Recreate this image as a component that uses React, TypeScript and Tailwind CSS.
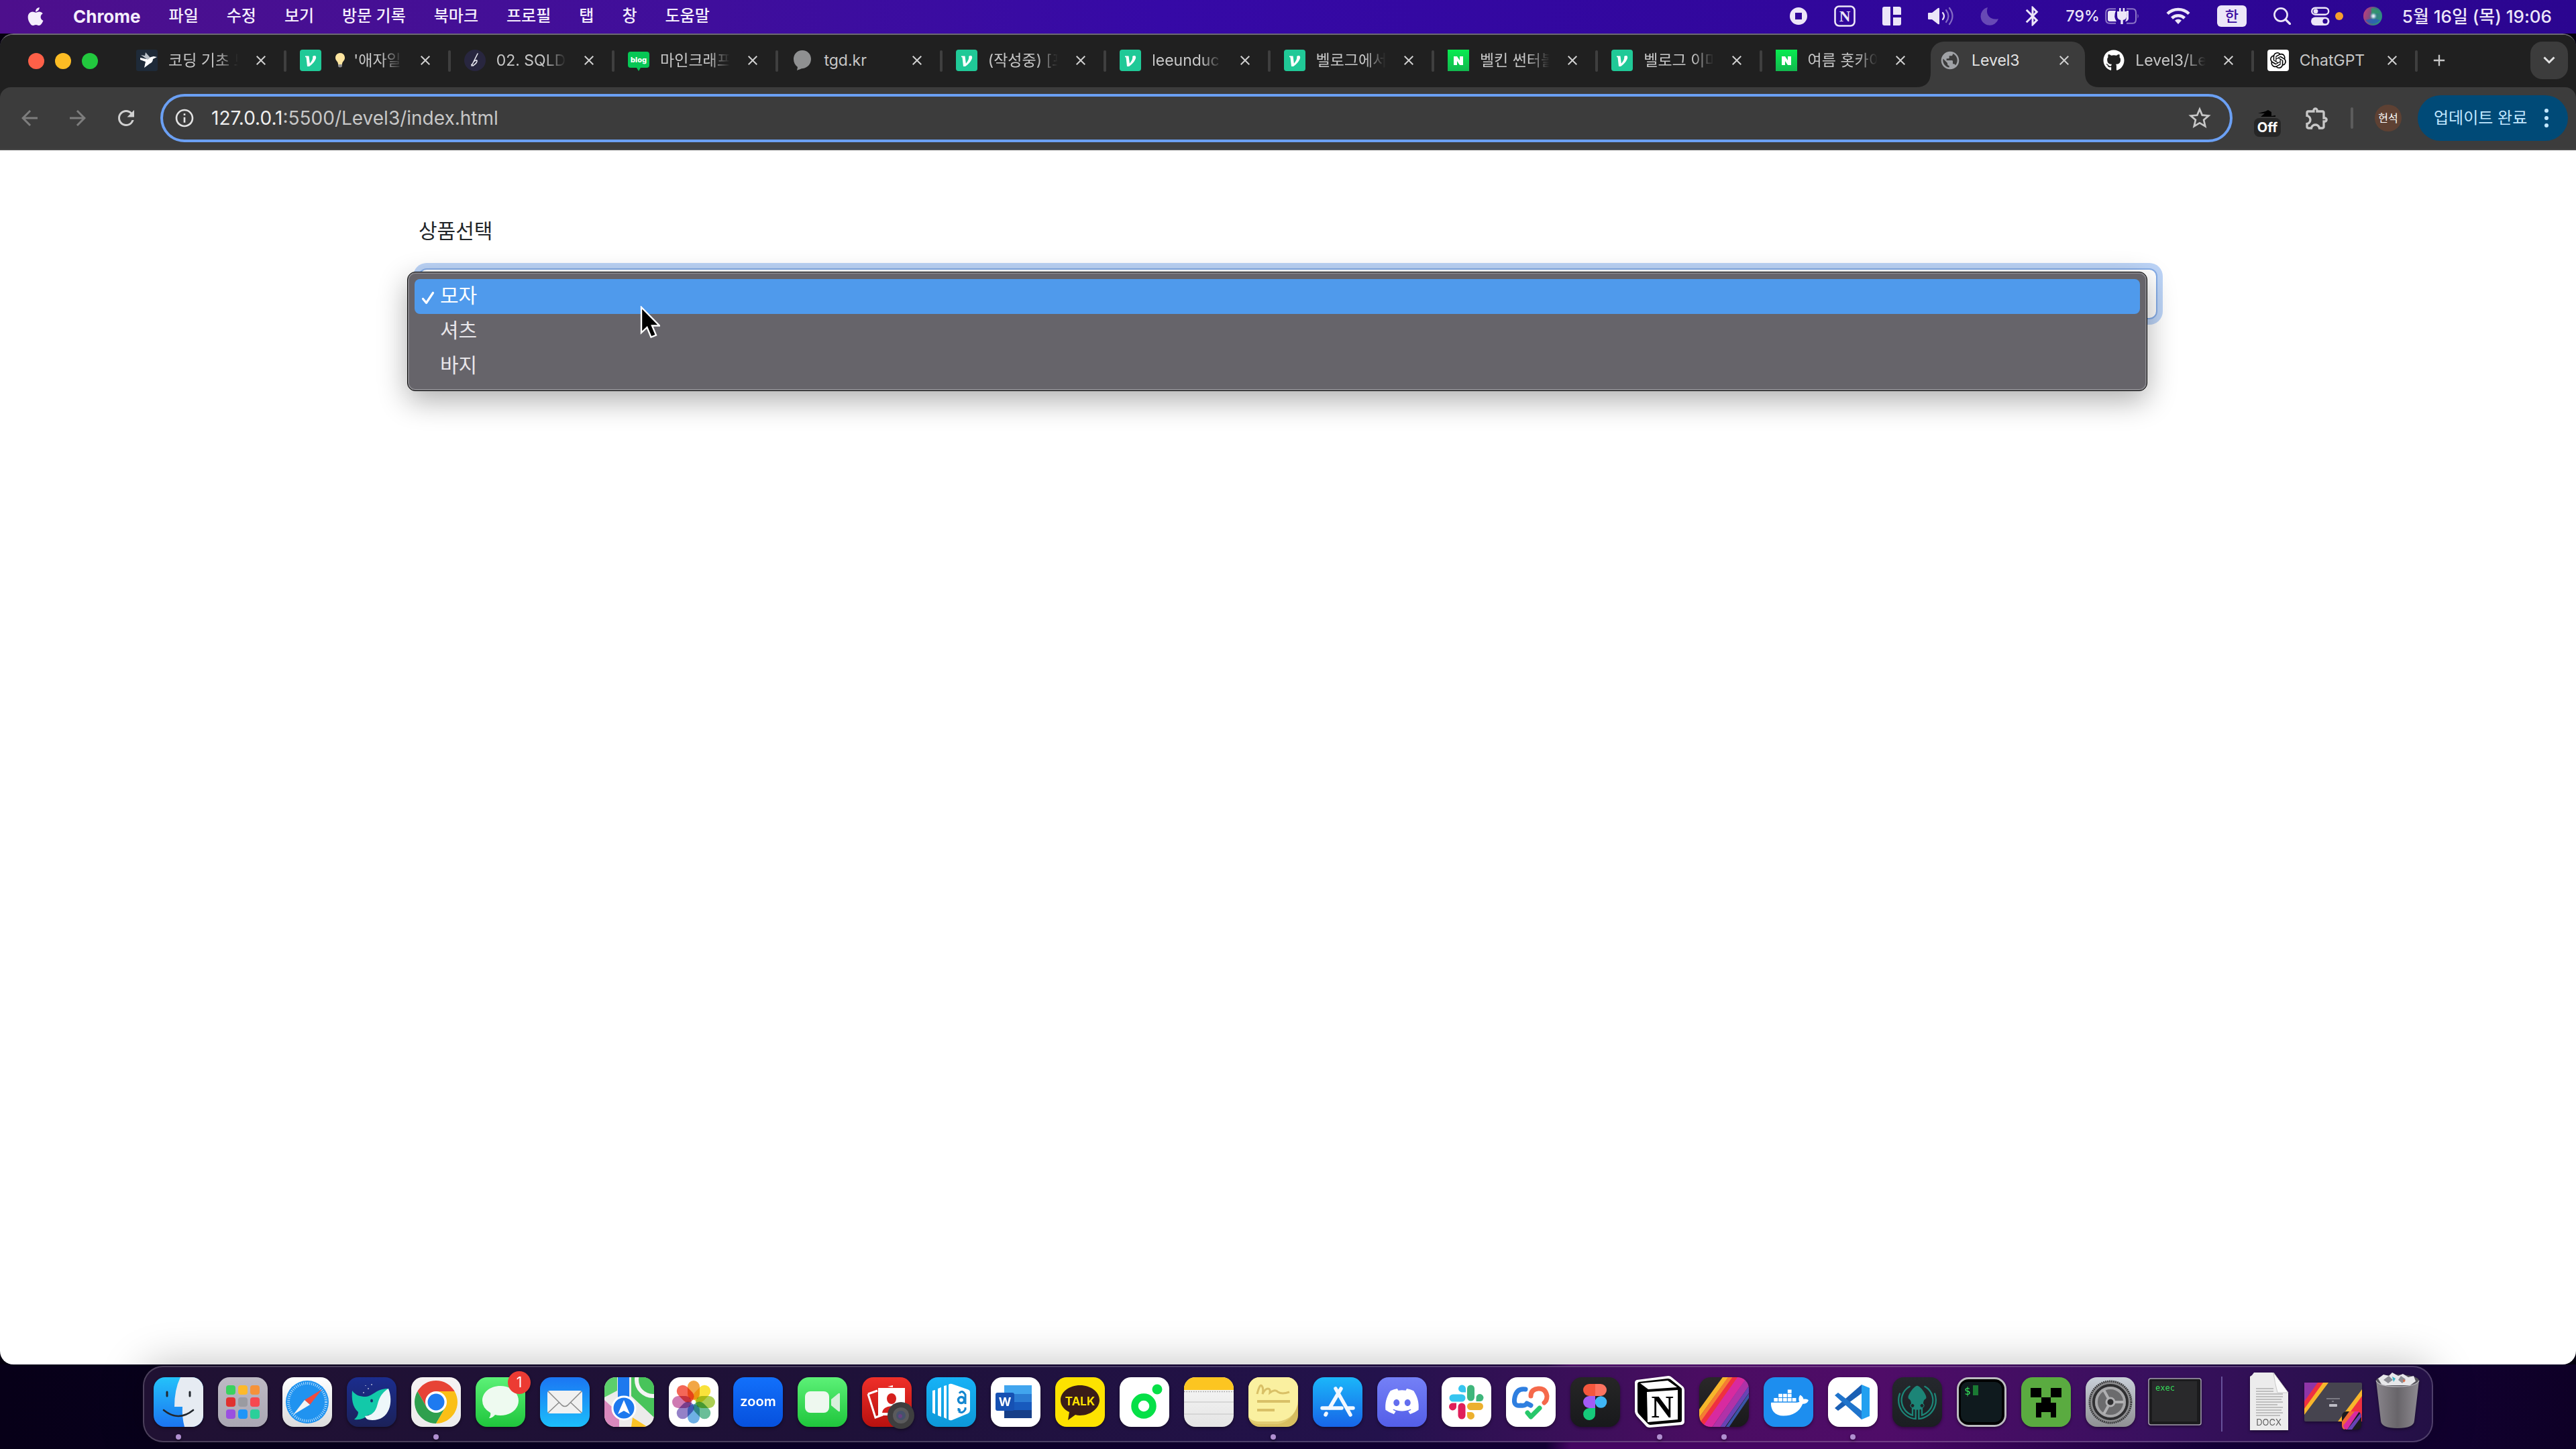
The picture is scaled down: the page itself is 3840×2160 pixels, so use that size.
import { ReactNode } from 'react'
import { clsx } from 'clsx'
import { FaApple, FaDiscord, FaDocker, FaGithub } from 'react-icons/fa'
import {
  MdAdd,
  MdArrowBack,
  MdArrowForward,
  MdBluetooth,
  MdClose,
  MdInfoOutline,
  MdOutlineExtension,
  MdPublic,
  MdRefresh,
  MdStarBorder,
} from 'react-icons/md'
import { SiGitkraken, SiOpenai } from 'react-icons/si'

const SANS = 'Inter, "Noto Sans CJK KR", sans-serif'

/* ---------- menu bar ---------- */

const MENUS = ['파일', '수정', '보기', '방문 기록', '북마크', '프로필', '탭', '창', '도움말']

function StatusIcons() {
  return (
    <div className="flex items-center gap-10 text-[#ece6f8]">
      <svg className="h-[26px] w-[26px]" viewBox="0 0 26 26">
        <path fillRule="evenodd" fill="currentColor" d="M13 0a13 13 0 1 1 0 26 13 13 0 0 1 0-26zM8 8v10h10V8z" />
      </svg>
      <svg className="h-8 w-8" viewBox="0 0 32 32">
        <rect x="1.5" y="1.5" width="29" height="29" rx="6" fill="none" stroke="currentColor" strokeWidth="2.6" />
        <text x="16" y="24" textAnchor="middle" fontFamily="Liberation Serif, serif" fontWeight="700" fontSize="23" fill="currentColor">N</text>
      </svg>
      <svg className="h-7 w-7" viewBox="0 0 28 28" fill="currentColor">
        <path d="M3 0h9v28H3a3 3 0 0 1-3-3V3a3 3 0 0 1 3-3zM16 0h9a3 3 0 0 1 3 3v9H16zM16 16h12v9a3 3 0 0 1-3 3h-9z" />
      </svg>
      <svg className="h-7 w-[38px]" viewBox="0 0 38 28" fill="none" stroke="currentColor" strokeWidth="2.2" strokeLinecap="round">
        <path d="M1 9h5l9-7q2-1 2 1v22q0 2-2 1l-9-7H1q-1 0-1-1v-8q0-1 1-1z" fill="currentColor" stroke="none" />
        <path d="M22 9q4 5 0 10" />
        <path d="M27 5q7 9 0 18" opacity=".45" />
        <path d="M32 2q9 12 0 24" opacity=".45" />
      </svg>
      <svg className="h-7 w-7" viewBox="0 0 28 28">
        <path d="M11 1C7 12 15 21 27 18A13.500 13.500 0 1 1 11 1z" fill="currentColor" opacity=".3" />
      </svg>
      <MdBluetooth className="h-8 w-5 scale-110" preserveAspectRatio="xMidYMid slice" />
      <div className="flex items-center gap-2">
        <span className="text-[23px] font-medium">79%</span>
        <svg className="h-6 w-[51px]" viewBox="0 0 51 24">
          <path d="M16 1.200H7Q1.200 1.200 1.200 7v10q0 5.800 5.800 5.800h9M32 1.200h9q5 0 5 5.800v10q0 5.800-5 5.800h-9" fill="none" stroke="currentColor" strokeWidth="2" opacity=".5" />
          <path d="M48.500 8.500q2.500 3.500 0 7z" fill="currentColor" opacity=".5" />
          <path d="M16 4H7q-3 0-3 3v10q0 3 3 3h10q-5-7-1-16zM32 4h3v12q-1 4-5 4 3-4 2-16z" fill="currentColor" />
          <path d="M18 5h3V0h2.600v5h3V0h2.600v5h3v6q0 6-5.500 7v6h-3.400v-6Q18 17 18 11z" fill="currentColor" />
        </svg>
      </div>
      <svg className="h-[26px] w-9" viewBox="0 0 36 26" fill="none" stroke="currentColor" strokeWidth="4.500">
        <path d="M2 9.500a23 23 0 0 1 32 0" />
        <path d="M8.500 16a14 14 0 0 1 19 0" />
        <path d="M18 25l-5-5.500a8 8 0 0 1 10 0z" fill="currentColor" stroke="none" />
      </svg>
      <span className="flex h-8 w-11 items-center justify-center rounded-md bg-[#ece6f8] text-[22px] leading-8 font-medium text-[#3a0aa0]">
        한
      </span>
      <div className="flex items-center gap-[30px]">
        <svg className="h-[26px] w-[26px]" viewBox="0 0 26 26" fill="none" stroke="currentColor" strokeWidth="2.600" strokeLinecap="round">
          <circle cx="11" cy="11" r="9.600" />
          <path d="M18 18l6.500 6.500" strokeWidth="3.200" />
        </svg>
        <div className="flex items-center gap-2">
          <svg className="h-7 w-7" viewBox="0 0 28 28">
            <rect x="1.200" y="1.700" width="25" height="10" rx="5" fill="none" stroke="currentColor" strokeWidth="2.400" />
            <circle cx="7" cy="6.700" r="3.400" fill="currentColor" />
            <rect x="0" y="15.500" width="27.500" height="12.500" rx="6.200" fill="currentColor" />
            <circle cx="21" cy="21.700" r="3.600" fill="#2c0592" />
          </svg>
          <span className="h-3 w-3 rounded-full bg-[#f89f2c]" />
        </div>
        <svg className="h-7 w-7" viewBox="0 0 28 28">
          <defs>
            <radialGradient id="siriGlow">
              <stop offset="0" stopColor="#fff" />
              <stop offset=".4" stopColor="#d6ecfa" stopOpacity=".7" />
              <stop offset="1" stopColor="#2a8fa0" stopOpacity="0" />
            </radialGradient>
            <linearGradient id="siriBase" x1="0" y1="0" x2="1" y2=".3">
              <stop offset="0" stopColor="#c83c7c" />
              <stop offset=".4" stopColor="#8a4a80" />
              <stop offset=".7" stopColor="#3a7a80" />
              <stop offset="1" stopColor="#2f8f80" />
            </linearGradient>
          </defs>
          <circle cx="14" cy="14" r="14" fill="url(#siriBase)" />
          <path d="M3 20q11-4 22 0a14 14 0 0 1-22 0z" fill="#2b5fb8" opacity=".8" />
          <path d="M12 2q9 0 13 8-6-1-13 4z" fill="#2f9a6c" opacity=".8" />
          <circle cx="15" cy="14" r="6" fill="url(#siriGlow)" />
        </svg>
        <time className="text-[26px] font-medium whitespace-nowrap">5월 16일 (목) 19:06</time>
      </div>
    </div>
  )
}

function MenuBar() {
  return (
    <header className="flex h-[50px] items-center justify-between bg-linear-to-r from-[#4d0f8c] via-[#3609a6] via-45% to-[#2b0590] pr-9 pb-[2px] pl-[39px] text-[24px] text-[#f4eefc]">
      <nav className="flex items-center gap-[42px] font-medium whitespace-nowrap">
        <FaApple className="h-[31px] w-7" />
        <span className="text-[26px] font-bold">Chrome</span>
        {MENUS.map((m) => (
          <button key={m} type="button">
            {m}
          </button>
        ))}
      </nav>
      <StatusIcons />
    </header>
  )
}

/* ---------- tabs ---------- */

const velog = (
  <svg viewBox="0 0 32 32" className="h-8 w-8">
    <rect width="32" height="32" rx="4" fill="#20c997" />
    <path d="M8 9.500h5.500l1.400 11.200C18 17 19.800 13.500 19.200 10c1.500-1.400 4.800-1.500 5 1.200C24.300 15.500 18.500 22 14 25h-3L9.500 11.500 8 11z" fill="#fff" />
  </svg>
)

const naver = (
  <svg viewBox="0 0 32 32" className="h-8 w-8">
    <defs>
      <linearGradient id="naverBg" x1="0" y1="0" x2="0" y2="1">
        <stop offset="0" stopColor="#08ec50" />
        <stop offset="1" stopColor="#12b84e" />
      </linearGradient>
    </defs>
    <rect width="32" height="32" fill="url(#naverBg)" />
    <path d="M9 10h5l4 6v-6h5v13h-5l-4-6v6H9z" fill="#fff" />
  </svg>
)

const bird = (
  <svg viewBox="0 0 32 32" className="h-8 w-8">
    <rect width="32" height="32" rx="3" fill="#1e2a38" />
    <path d="M6 12l9 2 7-3 4-1 5 1-6 3q0 5-5 7l-8 6 2-9-8-3z" fill="#fff" />
    <path d="M14 4l7 8-4 3-10-7 6 1z" fill="#b9c0c8" />
  </svg>
)

const quill = (
  <svg viewBox="0 0 32 32" className="h-8 w-8">
    <circle cx="16" cy="16" r="16" fill="#28263f" />
    <path d="M20 6L11 24M14 18q5-4 5-1t-6 7q-2 0-2-2" fill="none" stroke="#e5e5ee" strokeWidth="1.600" strokeLinecap="round" />
  </svg>
)

const blog = (
  <svg viewBox="0 0 32 32" className="h-8 w-8">
    <path d="M4 3h24q4 0 4 4v16q0 4-4 4h-9l-3 5-3-5H4q-4 0-4-4V7q0-4 4-4z" fill="#06c755" />
    <text x="16" y="18.500" textAnchor="middle" fontFamily="Inter, sans-serif" fontSize="11" fontWeight="800" fill="#fff">blog</text>
  </svg>
)

const bubble = (
  <svg viewBox="0 0 32 32" className="h-8 w-8">
    <path d="M16 1c8 0 13 6 13 13 0 8-6 13-12 14-3 0-6 2-9 3l1-5C5 23 3 19 3 14 3 7 8 1 16 1z" fill="#8f9091" />
  </svg>
)

const globe = <MdPublic className="h-8 w-8 text-[#a0a2a6]" />

const github = <FaGithub className="h-8 w-8 text-white" />

const openai = (
  <span className="flex h-8 w-8 items-center justify-center rounded bg-white">
    <SiOpenai className="h-6 w-6 text-black" />
  </span>
)

const bulb = (
  <svg viewBox="0 0 16 24" className="mr-3 ml-1 inline-block h-6 w-4 shrink-0">
    <path d="M8 1c5 0 7 4 7 7 0 5-4 5-4 10H5C5 13 1 13 1 8c0-3 2-7 7-7z" fill="#ffe6a0" />
    <path d="M5 18h6v3q-3 3-6 0z" fill="#8b8b8b" />
  </svg>
)

interface TabItem {
  icon: ReactNode
  title: string
  prefix?: ReactNode
  active?: boolean
}

const TABS: TabItem[] = [
  { icon: bird, title: '코딩 기초 트' },
  { icon: velog, title: "'애자일", prefix: bulb },
  { icon: quill, title: '02. SQLD' },
  { icon: blog, title: '마인크래프' },
  { icon: bubble, title: 'tgd.kr' },
  { icon: velog, title: '(작성중) [프' },
  { icon: velog, title: 'leeunduc' },
  { icon: velog, title: '벨로그에서' },
  { icon: naver, title: '벨킨 썬터볼' },
  { icon: velog, title: '벨로그 이미' },
  { icon: naver, title: '여름 홋카이' },
  { icon: globe, title: 'Level3', active: true },
  { icon: github, title: 'Level3/Le' },
  { icon: openai, title: 'ChatGPT' },
]

const UNFADED = ['tgd.kr', 'Level3', 'ChatGPT']

function Tab({ icon, title, prefix, active }: TabItem) {
  const divided = !active && title !== '여름 홋카이'
  return (
    <div className="relative flex h-14 min-w-0 flex-1 items-center pr-5 pl-5">
      {active && (
        <div className="absolute inset-x-[7px] top-0 -bottom-3 rounded-t-[20px] bg-[#3c3c3c]">
          <svg viewBox="0 0 22 22" className="absolute right-full bottom-0 h-[22px] w-[22px]">
            <path d="M22 0v22H0Q22 22 22 0z" fill="#3c3c3c" />
          </svg>
          <svg viewBox="0 0 22 22" className="absolute bottom-0 left-full h-[22px] w-[22px]">
            <path d="M0 0v22h22Q0 22 0 0z" fill="#3c3c3c" />
          </svg>
        </div>
      )}
      <button type="button" className="relative flex min-w-0 flex-1 items-center gap-4 text-left">
        <span className="shrink-0">{icon}</span>
        <span
          className={clsx(
            'flex flex-1 items-center overflow-hidden text-[23px] leading-8 whitespace-nowrap',
            active ? 'text-[#e3e3e3]' : 'text-[#c7c7c7]',
            !UNFADED.includes(title) && '[mask-image:linear-gradient(to_right,black_70%,transparent)]'
          )}
        >
          {prefix}
          {title}
        </span>
      </button>
      <button type="button" aria-label="닫기" className="relative ml-4 flex w-9 shrink-0 justify-center text-[#d0d0d0]">
        <MdClose className="h-6 w-6" />
      </button>
      {divided && <span className="absolute top-[13px] right-0 h-8 w-1 rounded-full bg-[#3f3f3f]" />}
    </div>
  )
}

function TabStrip() {
  return (
    <div className="flex h-[78px] bg-[#202020] pt-[10px]">
      <div className="flex h-14 w-[183px] shrink-0 items-center gap-4 pt-[2px] pl-[42px]">
        <span className="h-6 w-6 rounded-full bg-[#fe6048]" />
        <span className="h-6 w-6 rounded-full bg-[#fcbc24]" />
        <span className="h-6 w-6 rounded-full bg-[#22c83e]" />
      </div>
      <div className="flex min-w-0 flex-1">
        {TABS.map((tab) => (
          <Tab key={tab.title} {...tab} />
        ))}
      </div>
      <div className="flex h-14 w-[236px] shrink-0 items-center justify-between pr-3 pl-[18px]">
        <button type="button" aria-label="새 탭" className="text-[#c7c7c7]">
          <MdAdd className="h-7 w-7" />
        </button>
        <button type="button" aria-label="탭 검색" className="flex h-14 w-14 items-center justify-center rounded-[18px] bg-[#3c3c3c]">
          <svg viewBox="0 0 18 12" className="h-3 w-[18px]" fill="none" stroke="#e3e3e3" strokeWidth="3">
            <path d="M1.500 1.500L9 9l7.500-7.500" />
          </svg>
        </button>
      </div>
    </div>
  )
}

/* ---------- address bar ---------- */

function Toolbar() {
  return (
    <div className="bg-[#202020]">
      <div className="flex h-[94px] items-center rounded-t-2xl border-b-2 border-[#4a4a4a] bg-[#3c3c3c] pr-3 pl-2">
        <button type="button" aria-label="뒤로" className="flex w-[72px] justify-center text-[#7d7d7d]">
          <MdArrowBack className="h-9 w-9" />
        </button>
        <button type="button" aria-label="앞으로" className="flex w-[72px] justify-center text-[#7d7d7d]">
          <MdArrowForward className="h-9 w-9" />
        </button>
        <button type="button" aria-label="새로고침" className="flex w-[72px] justify-center text-[#d0d0d0]">
          <MdRefresh className="h-9 w-9" />
        </button>
        <div className="ml-[15px] flex h-[72px] min-w-0 flex-1 items-center rounded-full border-4 border-[#6ba0f4] pr-[25px] pl-4">
          <MdInfoOutline className="h-8 w-8 shrink-0 text-[#e3e3e3]" />
          <div className="ml-6 min-w-0 flex-1 text-[28px] leading-9 text-[#c7c7c7]" role="textbox" aria-label="주소">
            <span className="text-[#eeeeee]">127.0.0.1</span>:5500/Level3/index.html
          </div>
          <button type="button" aria-label="북마크" className="text-[#c7c7c7]">
            <MdStarBorder className="h-10 w-10" />
          </button>
        </div>
        <div className="ml-8 flex h-14 w-10 flex-col justify-end">
          <svg viewBox="0 0 28 12" className="mx-auto h-3 w-7 text-black">
            <path d="M0 5l11-3 4-2 5 3v6l6-1v2H4l6-5z" fill="currentColor" />
          </svg>
          <span className="flex h-7 items-center justify-center rounded-lg bg-[#262626] text-[20px] leading-7 font-bold text-white">Off</span>
        </div>
        <button type="button" aria-label="확장 프로그램" className="ml-9 text-[#c7c7c7]">
          <MdOutlineExtension className="h-10 w-9" preserveAspectRatio="xMidYMid slice" />
        </button>
        <span className="mx-8 h-8 w-1 rounded-full bg-[#5c5c5c]" />
        <span className="flex h-10 w-10 items-center justify-center rounded-full bg-[#5e4133] text-[16px] text-white">현석</span>
        <button
          type="button"
          className="ml-6 flex h-[68px] w-56 items-center justify-between rounded-full bg-[#004a77] pr-[28px] pl-[24px] text-[24px] whitespace-nowrap text-[#c2e7ff]"
        >
          업데이트 완료
          <svg viewBox="0 0 8 30" className="h-[30px] w-2" fill="currentColor">
            <circle cx="4" cy="4" r="3" />
            <circle cx="4" cy="15" r="3" />
            <circle cx="4" cy="26" r="3" />
          </svg>
        </button>
      </div>
    </div>
  )
}

/* ---------- page ---------- */

const OPTIONS = ['모자', '셔츠', '바지']

function Page() {
  return (
    <main className="min-h-0 flex-1 bg-white">
      <div className="mx-auto max-w-[2640px] px-6 pt-24 text-[30px]">
        <label htmlFor="product" className="mb-8 block leading-[48px] text-[#212529]">
          상품선택
        </label>
        <div className="relative">
          <select
            id="product"
            defaultValue="모자"
            className="block h-[76px] w-full appearance-none rounded-xl border-2 border-[#86ade8] bg-white px-6 text-[#212529] ring-8 ring-[#bcd4f7]"
          >
            {OPTIONS.map((o) => (
              <option key={o}>{o}</option>
            ))}
          </select>
          <ul
            role="listbox"
            aria-label="상품선택"
            className="absolute top-[5px] right-[15px] -left-[17px] rounded-xl border border-black bg-[#66646a] p-[10px] text-[#e8e6ea] shadow-[inset_0_0_0_2px_#87868b,0_14px_44px_rgba(0,0,0,0.32)]"
          >
            {OPTIONS.map((o, i) => (
              <li
                key={o}
                role="option"
                aria-selected={i === 0}
                className={clsx('flex h-[52px] items-center rounded-lg pb-1 pl-[10px]', i === 0 && 'bg-[#4f9aec] text-white')}
              >
                <span className="w-7">
                  {i === 0 && (
                    <svg viewBox="0 0 20 20" className="mt-2 h-5 w-5" fill="none" stroke="white" strokeWidth="3.200" strokeLinecap="round" strokeLinejoin="round">
                      <path d="M2.500 11.500l5 6L17.500 2.500" />
                    </svg>
                  )}
                </span>
                {o}
              </li>
            ))}
            <svg viewBox="0 0 30 48" className="absolute top-[50px] left-[346px] h-12 w-[30px]">
              <path d="M2 2v38l8.500-8 6 14.500 7.500-3-6-14h11z" fill="#000" stroke="#fff" strokeWidth="2.400" />
            </svg>
          </ul>
        </div>
      </div>
    </main>
  )
}

/* ---------- dock ---------- */

interface TileProps {
  id: string
  from: string
  to?: string
  children?: ReactNode
}

// rounded app tile with a vertical gradient; content is clipped to it
function Tile({ id, from, to = from, children }: TileProps) {
  return (
    <svg viewBox="0 0 74 74" className="h-[74px] w-[74px] overflow-visible">
      <defs>
        <linearGradient id={id} x1="0" y1="0" x2="0" y2="1">
          <stop offset="0" stopColor={from} />
          <stop offset="1" stopColor={to} />
        </linearGradient>
        <clipPath id={`${id}-clip`}>
          <rect width="74" height="74" rx="17" />
        </clipPath>
      </defs>
      <g clipPath={`url(#${id}-clip)`}>
        <rect width="74" height="74" fill={`url(#${id})`} />
        {children}
      </g>
    </svg>
  )
}

const LAUNCHPAD = ['#3ad25e', '#fdb92a', '#f5923a', '#e0312f', '#9a9ba1', '#f7484f', '#9a4fe0', '#1f95f8', '#2bcf9a']
const PETALS = ['#f19a2c', '#f9de20', '#9fc83c', '#55b58a', '#5aa5e2', '#8570c0', '#c967a8', '#f3523f']

interface App {
  name: string
  running?: boolean
  badge?: string
  art: ReactNode
}

const APPS: App[] = [
  {
    name: 'Finder',
    running: true,
    art: (
      <Tile id="finder" from="#24c2fa" to="#1b74f1">
        <path d="M40 0Q31 18 31 44h12q-1 15 3 30h28V0z" fill="#e6ebf2" />
        <path d="M20 22v6M54 22v6" stroke="#22272e" strokeWidth="3" strokeLinecap="round" />
        <path d="M15 49q22 18 44 0" fill="none" stroke="#22272e" strokeWidth="2.600" strokeLinecap="round" />
      </Tile>
    ),
  },
  {
    name: 'Launchpad',
    art: (
      <Tile id="launchpad" from="#bdb9c4" to="#aaa7b3">
        {LAUNCHPAD.map((c, i) => (
          <rect key={c} x={12 + (i % 3) * 18} y={12 + Math.floor(i / 3) * 18} width="14" height="14" rx="4" fill={c} />
        ))}
      </Tile>
    ),
  },
  {
    name: 'Safari',
    art: (
      <Tile id="safari" from="#ffffff" to="#dcdcdc">
        <circle cx="37" cy="37" r="32" fill="#2093f0" />
        <circle cx="37" cy="37" r="28" fill="none" stroke="#bfe2fb" strokeWidth="4" strokeDasharray="1 2" />
        <path d="M59 18L41 41l-8-7z" fill="#f14c3e" />
        <path d="M33 34l8 7-25 15z" fill="#f3f3f3" />
      </Tile>
    ),
  },
  {
    name: 'Whale',
    art: (
      <Tile id="whale" from="#1b2d8e" to="#1b2159">
        <path d="M8 20c5 7 12 9 20 9 12-1 15-12 34-12L48 52 30 57q-5 7-19 6 6-5 6-11C8 44 7 32 8 20z" fill="#12c9a9" />
        <path d="M62 17c8 20 2 47-24 47-8 0-10-3-11-6 16-2 17-12 20-22 3-9 8-15 15-19z" fill="#eef7fa" />
        <ellipse cx="37" cy="35" rx="2" ry="2.500" fill="#16336f" />
        <path d="M25 22v2M32 16v2M37 10v2M28 12v1" stroke="#fff" strokeWidth="1" />
      </Tile>
    ),
  },
  {
    name: 'Chrome',
    running: true,
    art: (
      <Tile id="chrome" from="#f6f3f3" to="#ececec">
        <path d="M9.300 21A32 32 0 0 1 64.700 21H37L23.100 45z" fill="#e74335" />
        <path d="M9.300 21A32 32 0 0 0 37 69l13.900-24H23.100z" fill="#2fa04e" />
        <path d="M64.700 21A32 32 0 0 1 37 69l13.900-24L37 21z" fill="#fabf16" />
        <circle cx="37" cy="37" r="16" fill="#fff" />
        <circle cx="37" cy="37" r="12.500" fill="#1e7af0" />
      </Tile>
    ),
  },
  {
    name: '메시지',
    badge: '1',
    art: (
      <Tile id="messages" from="#5cf177" to="#1fc63c">
        <path d="M37 13c16 0 27 10 27 22S53 57 37 57q-5 0-8-1-4 5-9 5 3-4 2-8-12-7-12-18c0-12 11-22 27-22z" fill="#eefaf0" />
      </Tile>
    ),
  },
  {
    name: 'Mail',
    art: (
      <Tile id="mail" from="#1b76f3" to="#1cbefb">
        <rect x="11" y="20" width="52" height="34" rx="4" fill="#f1f1f1" />
        <path d="M12 21l21 21q4 3 8 0l21-21M12 53l17-16M62 53L45 37" fill="none" stroke="#8c8c8c" strokeWidth="1.600" />
      </Tile>
    ),
  },
  {
    name: '지도',
    art: (
      <Tile id="maps" from="#ecebea">
        <path d="M0 0h19v20L0 30z" fill="#5ccf6b" />
        <path d="M40 0h34v60L40 28z" fill="#48c45a" />
        <circle cx="72" cy="4" r="24" fill="#48c45a" stroke="#f4f4f4" strokeWidth="6" />
        <path d="M0 34l22 20v20H0z" fill="#d988bd" />
        <path d="M42 60l22 14H40z" fill="#fcc224" />
        <path d="M20 0h17v40H20z" fill="#1d79ee" />
        <circle cx="29" cy="46" r="17" fill="#1d79ee" stroke="#fff" strokeWidth="3" />
        <path d="M29 34l9 21-9-5-9 5z" fill="#fff" />
      </Tile>
    ),
  },
  {
    name: '사진',
    art: (
      <Tile id="photos" from="#ffffff">
        {PETALS.map((c, i) => (
          <rect
            key={c}
            x="28"
            y="5"
            width="18"
            height="29"
            rx="9"
            fill={c}
            opacity=".88"
            transform={`rotate(${i * 45} 37 37)`}
            className="mix-blend-multiply"
          />
        ))}
      </Tile>
    ),
  },
  {
    name: 'zoom',
    art: (
      <Tile id="zoom" from="#1270fb" to="#0650dd">
        <text x="37" y="43" textAnchor="middle" fontFamily="Inter, sans-serif" fontWeight="600" fontSize="20" fill="#fff">zoom</text>
      </Tile>
    ),
  },
  {
    name: 'FaceTime',
    art: (
      <Tile id="facetime" from="#5cf177" to="#1fc63c">
        <rect x="11" y="21" width="36" height="32" rx="8" fill="#eef8ef" />
        <path d="M50 33l11-9q2-1 2 1v25q0 2-2 1l-11-9z" fill="#d9efdc" />
      </Tile>
    ),
  },
  {
    name: 'Photo Booth',
    art: (
      <svg viewBox="0 0 74 74" className="h-[74px] w-[74px] overflow-visible">
        <defs>
          <linearGradient id="booth" x1="0" y1="0" x2="0" y2="1">
            <stop offset="0" stopColor="#ef2f29" />
            <stop offset="1" stopColor="#b8110f" />
          </linearGradient>
        </defs>
        <rect width="74" height="74" rx="17" fill="url(#booth)" />
        <path d="M9 25l14-5M9 25l11 35 11-4" fill="none" stroke="#fff" strokeWidth="3" />
        <path d="M38 14l8-2v3z" fill="#fff" />
        <rect x="24" y="16" width="40" height="41" fill="#fff" />
        <ellipse cx="44" cy="32" rx="7" ry="8" fill="#d5201d" />
        <path d="M30 53q1-9 14-10l8 4-8 6z" fill="#d5201d" />
        <circle cx="58" cy="57" r="20" fill="#3e3e3f" />
        <circle cx="58" cy="57" r="12" fill="#5a5a5c" />
        <circle cx="58" cy="57" r="7" fill="#46516b" />
        <circle cx="57" cy="58" r="3" fill="#6a3f80" />
      </svg>
    ),
  },
  {
    name: '밀리의 서재',
    art: (
      <Tile id="millie" from="#17b2f6" to="#0d98d8">
        <path d="M9 20l4-1v36l-4-2zM17 17l5-2v44l-5-2zM26 13l4-1v50l-4-2z" fill="#fff" />
        <path d="M33 11q2-2 5-1l23 8q4 1 4 4v27q0 3-3 5L38 64q-3 1-5-1z" fill="#fff" />
        <circle cx="52" cy="34" r="4.500" fill="none" stroke="#1387d0" strokeWidth="3.400" />
        <path d="M49 24q4-6 9 2v14M48 46v3h3M48 51q6 4 10-3v-3" fill="none" stroke="#1387d0" strokeWidth="3" />
      </Tile>
    ),
  },
  {
    name: 'Word',
    art: (
      <Tile id="word" from="#ffffff">
        <rect x="20" y="12" width="41" height="13" fill="#41a5ee" />
        <rect x="20" y="25" width="41" height="12" fill="#2b7cd3" />
        <rect x="20" y="37" width="41" height="12" fill="#185abd" />
        <rect x="20" y="49" width="41" height="12" fill="#163f88" />
        <rect x="7" y="23" width="28" height="27" rx="3" fill="#1651b3" />
        <text x="21" y="43" textAnchor="middle" fontFamily="Inter, sans-serif" fontWeight="700" fontSize="18" fill="#fff">W</text>
      </Tile>
    ),
  },
  {
    name: '카카오톡',
    art: (
      <Tile id="kakao" from="#fde200">
        <path d="M37 12c16 0 29 10 29 22S53 57 37 57q-4 0-7-1l-11 8 2-12C13 48 8 42 8 34c0-12 13-22 29-22z" fill="#3a1c18" />
        <text x="37" y="42" textAnchor="middle" fontFamily="Inter, sans-serif" fontWeight="700" fontSize="17" fill="#fde200">TALK</text>
      </Tile>
    ),
  },
  {
    name: 'Melon',
    art: (
      <Tile id="melon" from="#ffffff">
        <circle cx="36" cy="43" r="13.500" fill="none" stroke="#06e047" strokeWidth="10.500" />
        <circle cx="56" cy="18" r="7.500" fill="#06e047" />
      </Tile>
    ),
  },
  {
    name: '메모',
    art: (
      <Tile id="notes" from="#f8f8f8" to="#e4e4e4">
        <rect width="74" height="19" fill="#fcc521" />
        <path d="M0 21.500h74" stroke="#9c9c9c" strokeWidth="1.500" strokeDasharray="1.500 2" />
        <path d="M0 37h74M0 55h74" stroke="#cfcfcf" strokeWidth="1.500" />
      </Tile>
    ),
  },
  {
    name: '스티커',
    running: true,
    art: (
      <Tile id="stickies" from="#cdb057" to="#d9c061">
        <path d="M0 0h74v40Q66 66 44 70H14Q2 68 0 60z" fill="#e2cd73" />
        <path d="M0 0h74v34Q72 62 44 66H14Q0 64 0 56z" fill="#faf0a0" />
        <path d="M13 25q4-16 7-12t1 12q4-8 8-8t3 6q8-6 12-1 6 4 17 0" fill="none" stroke="#d9c067" strokeWidth="3" />
        <path d="M13 36h49M13 49h26" stroke="#d9c067" strokeWidth="4" />
      </Tile>
    ),
  },
  {
    name: 'App Store',
    art: (
      <Tile id="appstore" from="#1bb6f9" to="#1765e8">
        <g fill="none" stroke="#f2f8ff" strokeWidth="5.500" strokeLinecap="round">
          <path d="M42 17L25 46M34 17l22 39M14 46h29M53 46h7M20 54l-1 2" />
        </g>
      </Tile>
    ),
  },
  {
    name: 'Discord',
    art: (
      <Tile id="discord" from="#7480f6" to="#545ee8">
        <FaDiscord x={10} y={9} size={54} color="#fff" />
      </Tile>
    ),
  },
  {
    name: 'Slack',
    art: (
      <Tile id="slack" from="#ffffff">
        <g strokeWidth="11" strokeLinecap="round">
          <path d="M17 31h13" stroke="#36c5f0" />
          <path d="M43.500 17v13" stroke="#3fb67b" />
          <path d="M43.500 43.500h13" stroke="#ecb02e" />
          <path d="M30 44v13" stroke="#e01e5a" />
        </g>
        <path d="M36 22.500h-6a5.500 5.500 0 1 1 6-5.500z" fill="#36c5f0" />
        <path d="M51.500 36v-6a5.500 5.500 0 1 1 6 6z" fill="#3fb67b" />
        <path d="M38 52h6a5.500 5.500 0 1 1-6 6z" fill="#ecb02e" />
        <path d="M22 38.500v6a5.500 5.500 0 1 1-6-6z" fill="#e01e5a" />
      </Tile>
    ),
  },
  {
    name: '맞춤법',
    art: (
      <Tile id="checker" from="#ffffff">
        <g fill="none" strokeWidth="7" strokeLinecap="round" strokeLinejoin="round">
          <path d="M29 18q-13-2-16 12t9 12q7 1 9-3l6 3" stroke="#2f7fe0" />
          <path d="M37 28q0-10 11-11t13 11q0 7-4 10" stroke="#f5694b" />
          <path d="M32 53l5 6 13-13" stroke="#28c76a" />
        </g>
      </Tile>
    ),
  },
  {
    name: 'Figma',
    art: (
      <Tile id="figma" from="#262626" to="#18191c">
        <path d="M28 10h9v18h-9a9 9 0 0 1 0-18z" fill="#f4573d" />
        <path d="M37 10h8a9 9 0 0 1 0 18h-8z" fill="#fb7360" />
        <path d="M28 28h9v18h-9a9 9 0 0 1 0-18z" fill="#a35cf6" />
        <circle cx="45.500" cy="37" r="8.800" fill="#3fb6f6" />
        <path d="M28 46h9v8a9 9 0 1 1-9-8z" fill="#16c97a" />
      </Tile>
    ),
  },
  {
    name: 'Notion',
    running: true,
    art: (
      <svg viewBox="0 0 74 74" className="h-[74px] w-[74px] overflow-visible">
        <path d="M3 4L50-2q3 0 5 2l17 14q2 2 2 5v47q0 4-4 5l-48 4q-4 0-6-3L3 58q-3-4-3-7V8q0-3 3-4z" fill="#fff" />
        <path d="M6 7l43-5q2 0 4 1l15 12q2 1 2 3v46q0 3-3 3l-44 4q-2 0-4-2L6 55q-2-2-2-5V10q0-2 2-3z" fill="#000" />
        <path d="M8 9l41-4 14 10-43 3z" fill="#fff" />
        <path d="M20 22l46-3v44l-45 4z" fill="#fff" transform="translate(-2 0)" />
        <text x="41" y="60" textAnchor="middle" fontFamily="Liberation Serif, serif" fontWeight="700" fontSize="46" fill="#000">N</text>
      </svg>
    ),
  },
  {
    name: 'Screen Studio',
    running: true,
    art: (
      <Tile id="screen" from="#2a2829" to="#19191b">
        <path d="M45-8L-8 65" stroke="#f7b62b" strokeWidth="7" />
        <path d="M53-8L-6 74" stroke="#f57c33" strokeWidth="7" />
        <path d="M60-8L0 76" stroke="#ef3040" strokeWidth="8" />
        <path d="M70-8L8 80" stroke="#d82aa0" strokeWidth="12" />
        <path d="M80-4L20 82" stroke="#b032a8" strokeWidth="10" />
        <path d="M84 4L28 84" stroke="#6843b5" strokeWidth="6" />
        <path d="M86 10L34 86" stroke="#3a55a8" strokeWidth="4" />
      </Tile>
    ),
  },
  {
    name: 'Docker',
    art: (
      <Tile id="docker" from="#1d8eef">
        <FaDocker x={11} y={10} size={56} color="#fff" />
      </Tile>
    ),
  },
  {
    name: 'VS Code',
    running: true,
    art: (
      <Tile id="vscode" from="#ffffff">
        <path d="M50 11L10 46l5 4 35-26z" fill="#1a5fb4" />
        <path d="M10 27l5-4 35 27v13z" fill="#1f74cc" />
        <path d="M50 11l12 5v42l-12 5z" fill="#23a0f0" />
      </Tile>
    ),
  },
  {
    name: 'GitKraken',
    art: (
      <Tile id="kraken" from="#25282d" to="#1b1e22">
        <SiGitkraken x={8} y={9} size={58} color="#1c8577" />
      </Tile>
    ),
  },
  {
    name: 'iTerm',
    art: (
      <svg viewBox="0 0 74 74" className="h-[74px] w-[74px]">
        <rect x="1.500" y="1.500" width="71" height="71" rx="16" fill="#000" stroke="#bcbcc0" strokeWidth="3" />
        <rect x="6" y="7" width="61" height="60" rx="10" fill="#0f1a1e" />
        <text x="11" y="26" fontFamily="DejaVu Sans Mono, monospace" fontSize="16" fill="#35e05a">$</text>
        <rect x="24" y="12" width="8" height="15" fill="#1a7a33" />
      </svg>
    ),
  },
  {
    name: 'Minecraft',
    art: (
      <Tile id="creeper" from="#5aab40">
        <path d="M14 16h16v14H14zM44 16h16v14H44zM30 30h14v8h8v22h-8v-8H30v8h-8V38h8z" fill="#000" />
      </Tile>
    ),
  },
  {
    name: '설정',
    art: (
      <Tile id="settings" from="#c9cfd8" to="#8f9093">
        <circle cx="37" cy="37" r="31" fill="#8c8c8e" stroke="#3a3a3c" strokeWidth="3" strokeDasharray="2 1" />
        <circle cx="37" cy="37" r="25" fill="#6b6b6d" stroke="#2f2f31" strokeWidth="4" />
        <circle cx="37" cy="37" r="21" fill="none" stroke="#a6a6a8" strokeWidth="4" />
        <path d="M37 37h20M37 37L27 19M37 37L27 55" stroke="#b0b0b2" strokeWidth="4" />
        <circle cx="37" cy="37" r="6" fill="#2f2f31" stroke="#b0b0b2" strokeWidth="3" />
      </Tile>
    ),
  },
  {
    name: 'exec',
    art: (
      <svg viewBox="0 0 74 74" className="h-[74px] w-[74px] overflow-visible">
        <rect x="-2" y="2" width="78" height="69" rx="3" fill="#1b1b1d" stroke="#a5a0ae" strokeWidth="1.500" />
        <rect x="3" y="6" width="67" height="60" fill="#29292b" />
        <text x="8" y="20" fontFamily="DejaVu Sans Mono, monospace" fontSize="12" fill="#35e05a">exec</text>
      </svg>
    ),
  },
]

const FILES: App[] = [
  {
    name: 'DOCX',
    art: (
      <svg viewBox="0 0 74 74" className="h-[74px] w-[74px] overflow-visible">
        <path d="M12-3l3-4h28l23 30v56H9V-1z" fill="#ececec" />
        <path d="M44-7l22 30H50q-4-14-6-30z" fill="#fafafa" stroke="#c8c8c8" strokeWidth="1" />
        <path d="M18 17h26M18 21h26M18 25h40M18 29h40M18 33h38M18 37h40M18 41h32M18 45h40M18 49h38M18 53h40M18 57h36" stroke="#b0b0b0" strokeWidth="1.500" />
        <rect x="14" y="59" width="48" height="16" fill="#ececec" />
        <text x="37" y="72" textAnchor="middle" fontFamily="Inter, sans-serif" fontSize="13" fill="#5c5c5c">DOCX</text>
      </svg>
    ),
  },
  {
    name: '비디오',
    art: (
      <svg viewBox="0 0 74 74" className="h-[74px] w-[74px] overflow-visible">
        <rect x="-6" y="8" width="86" height="58" rx="2" fill="#46444f" />
        <path d="M2 8h28L-6 56V20z" fill="#f7b62b" />
        <path d="M2 8h20L-6 47V20z" fill="#ef3040" />
        <path d="M-6 8h20L-6 36z" fill="#8f35a8" />
        <path d="M80 18v48H44z" fill="#f7b62b" />
        <path d="M80 28v38H52z" fill="#ef3040" />
        <rect x="31" y="40" width="12" height="4" rx="1" fill="#bdbcc4" />
        <path d="M27 32h20M35 36h3" stroke="#8c8a94" strokeWidth="1.500" />
        <rect x="50" y="51" width="29" height="27" rx="7" fill="#1c1b1e" />
        <path d="M50 66l11-15h13L54 78q-4-1-4-6z" fill="#f06a35" />
        <path d="M52 72l17-21h7L58 78q-5 0-6-6z" fill="#d82aa0" />
        <path d="M58 78l20-25 1 6-14 19z" fill="#6843b5" />
      </svg>
    ),
  },
  {
    name: '휴지통',
    art: (
      <svg viewBox="0 0 74 74" className="h-[74px] w-[74px] overflow-visible">
        <defs>
          <linearGradient id="can">
            <stop offset="0" stopColor="#8d8a8f" />
            <stop offset=".5" stopColor="#6b696d" />
            <stop offset="1" stopColor="#949196" />
          </linearGradient>
        </defs>
        <ellipse cx="37" cy="5" rx="32" ry="9" fill="#55535a" />
        <path d="M8 2l8-6 8 2 5-5 9 5 7-3 8 5 8-2 3 8-8 6H14z" fill="#e7e7ea" />
        <path d="M16 4l8-6 6 6-7 5zM42-2l7 5-5 6-6-5z" fill="#8b8b92" />
        <path d="M29-1l5 3-3 5z" fill="#3ab6c8" />
        <path d="M45 3l4 2-3 3z" fill="#e0643c" />
        <path d="M5 5q4 9 32 9t32-9l-7 60q-1 11-25 11T12 65z" fill="url(#can)" opacity=".96" />
        <path d="M5 5q4 9 32 9t32-9" fill="none" stroke="#b5b3b8" strokeWidth="1.500" />
      </svg>
    ),
  },
]

function DockItem({ name, running, badge, art }: App) {
  return (
    <button type="button" aria-label={name} className="relative h-[74px] w-[74px] shrink-0 drop-shadow-[0_2px_2px_rgba(0,0,0,0.4)]">
      {art}
      {badge && (
        <span className="absolute -top-[9px] -right-[8px] flex h-[34px] w-[34px] items-center justify-center rounded-full bg-[#ec3b33] text-[21px] text-white">
          {badge}
        </span>
      )}
      {running && <span className="absolute top-full left-1/2 mt-[11px] h-2 w-2 -translate-x-1/2 rounded-full bg-[#b08fd0]" />}
    </button>
  )
}

function Dock() {
  return (
    <footer className="relative flex h-[126px] justify-center bg-[linear-gradient(90deg,#070018_0%,#0b0028_25%,#16003c_60%,#4f0770_61%,#4f0770_74%,#17013f_86%,#0e0026_100%)] pt-[2px]">
      <div className="flex h-[114px] gap-[22px] rounded-[30px] border-2 border-white/20 bg-[linear-gradient(90deg,#201133_0%,#1e1138_30%,#23124c_54%,#4a0d62_68%,#4f0c68_76%,#38105e_88%,#231045_100%)] bg-origin-border px-[14px] pt-[15px] shadow-[0_0_64px_rgba(0,0,0,0.27)]">
        {APPS.map((app) => (
          <DockItem key={app.name} {...app} />
        ))}
        <span className="mx-[10px] -mt-px h-[82px] w-[2px] bg-[#67529a]" />
        {FILES.map((file) => (
          <DockItem key={file.name} {...file} />
        ))}
      </div>
    </footer>
  )
}

export default function App() {
  return (
    <div className="flex min-h-screen flex-col bg-[#05000f]" style={{ fontFamily: SANS }}>
      <MenuBar />
      <div className="flex flex-1 flex-col overflow-hidden rounded-[20px] border-t-2 border-[#6c6a72]">
        <TabStrip />
        <Toolbar />
        <Page />
      </div>
      <Dock />
    </div>
  )
}
